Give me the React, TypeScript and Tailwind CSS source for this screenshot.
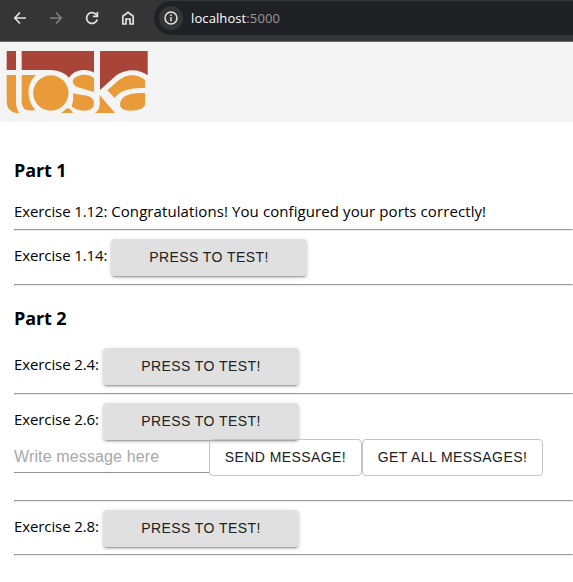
import type { ReactNode } from "react";

function Toolbar() {
  return (
    <div className="flex h-[42px] items-start border-b border-[#6c6c6c] bg-[#353535] text-[#e3e3e3]">
      <div className="flex h-9 w-[154px] items-center gap-4 pl-[10px]">
        <svg className="size-5 shrink-0" viewBox="0 0 20 20" fill="none" stroke="currentColor" strokeWidth="1.7">
          <path d="M16 10H5M10 4.5 4.8 10l5.2 5.5" />
        </svg>
        <svg className="size-5 shrink-0 text-[#808080]" viewBox="0 0 20 20" fill="none" stroke="currentColor" strokeWidth="1.7">
          <path d="M4 10h11M10 4.5l5.2 5.5-5.2 5.5" />
        </svg>
        <svg className="size-5 shrink-0" viewBox="0 0 20 20" fill="none" stroke="currentColor" strokeWidth="1.7">
          <path d="M15.2 11.5A5.4 5.4 0 1 1 13.8 6.2L15 7.5" />
          <path d="M15.4 4v4.3h-4.5" />
        </svg>
        <svg className="size-5 shrink-0" viewBox="0 0 20 20" fill="none" stroke="currentColor" strokeWidth="1.7">
          <path d="M4.8 8.2 10 4.4l5.2 3.8V16H12v-5H8v5H4.800Z" />
        </svg>
      </div>
      <div className="mt-px flex h-[34px] flex-1 items-center rounded-l-full bg-[#202124] pl-[5px]">
        <div className="flex size-6 items-center justify-center rounded-full bg-[#353535]">
          <svg className="size-4" viewBox="0 0 16 16" fill="none" stroke="currentColor" strokeWidth="1.5">
            <circle cx="8" cy="8" r="6" />
            <path d="M8 7.200v4M8 4.600v1.500" />
          </svg>
        </div>
        <p className="ml-2 pt-px font-['Open_Sans',sans-serif] text-[13px] tracking-[0.1px] text-white">
          localhost<span className="text-[#9a9a9a]">:5000</span>
        </p>
      </div>
    </div>
  );
}

function Logo() {
  return (
    <svg className="h-20 w-40" viewBox="0 0 480 240" role="img" aria-label="toska">
      <path fill="#a94438" d="M20 21H48V78H20ZM65 21H282V86C263 74 225 73 207 101C187 80 166 78 140 78H65ZM300 21H443V94C420 76 383 71 349 94L300 138Z" />
      <g fill="#e99b39">
        <path d="M20 93H48V170Q48 195 58 207H48Q20 202 20 172Z" />
        <path d="M65 93H108C78 119 79 168 106 198Q68 206 65 177Z" />
        <circle cx="152.500" cy="147" r="53" />
        <path d="M282 103V144L238 131Q219 127 218 111C225 91 265 85 282 103Z" />
        <path d="M219 147C234 154 260 151 274 161C288 172 283 195 263 199C241 203 222 195 215 187Q222 168 219 147Z" />
        <path d="M197 196Q207 188 215 201L219 207H184ZM299 153 345 207H284Q299 199 299 181Z" />
        <path d="M322 139L356 109C380 88 414 89 435 108V132C385 130 356 143 344 162Z" />
        <path d="M435 147V181C432 196 411 200 391 200C367 200 357 189 361 174C367 153 396 146 435 147Z" />
      </g>
    </svg>
  );
}

function Rule({ className = "" }: { className?: string }) {
  return <hr className={`h-[2px] shrink-0 border border-t-[#9a9a9a] border-r-[#eeeeee] border-b-[#eeeeee] border-l-[#9a9a9a] ${className}`} />;
}

function TestButton() {
  return (
    <button className="h-[36.5px] w-[196px] rounded-[4px] bg-[#e0e0e0] pt-px font-['Liberation_Sans',sans-serif] text-[14px] tracking-[0.42px] text-[#212121] shadow-[0_3px_1px_-2px_rgba(0,0,0,0.2),0_2px_2px_0_rgba(0,0,0,0.14),0_1px_5px_0_rgba(0,0,0,0.12)]">
      PRESS TO TEST!
    </button>
  );
}

function ActionButton({ children, className }: { children: ReactNode; className: string }) {
  return (
    <button className={`h-[37px] rounded-[4px] border border-[#c4c4c4] font-['Liberation_Sans',sans-serif] text-[14px] tracking-[0.42px] text-[#212121] ${className}`}>
      {children}
    </button>
  );
}

function Exercise({ label, wide = false }: { label: string; wide?: boolean }) {
  return (
    <div className="flex h-[36.5px]">
      <p className={`shrink-0 pt-1 leading-6 ${wide ? "w-[97px]" : "w-[89px]"}`}>{label}</p>
      <TestButton />
    </div>
  );
}

export default function App() {
  return (
    <div className="h-[582px] overflow-hidden bg-white font-['Open_Sans',sans-serif] text-[15px] tracking-[-0.1px] whitespace-nowrap text-black">
      <Toolbar />
      <header className="h-20 bg-[#f4f4f4] pt-[2px]">
        <Logo />
      </header>
      <main className="flex flex-col pl-[14px]">
        <h3 className="mt-[35px] h-[26px] text-[18px] leading-[26px] font-bold">Part 1</h3>
        <p className="mt-4 h-6 leading-6">
          Exercise 1.12: <span className="tracking-[0.09px]">Congratulations! You configured your ports correctly!</span>
        </p>
        <Rule className="mt-[6px] mb-2" />
        <Exercise label="Exercise 1.14:" wide />
        <Rule className="mt-[8.5px]" />
        <h3 className="mt-[19px] h-[26px] text-[18px] leading-[26px] font-bold">Part 2</h3>
        <div className="mt-[17px]">
          <Exercise label="Exercise 2.4:" />
        </div>
        <Rule className="mt-[8.5px] mb-2" />
        <Exercise label="Exercise 2.6:" />
        <div className="-mt-[0.5px] flex h-[37px]">
          <input
            className="h-[34px] w-[195px] border-b border-[#949494] pt-[3px] font-['Liberation_Sans',sans-serif] text-[16px] tracking-[0.13px] outline-none placeholder:text-[#a8a8a8]"
            placeholder="Write message here"
          />
          <ActionButton className="w-[153px]">SEND MESSAGE!</ActionButton>
          <ActionButton className="w-[181px]">GET ALL MESSAGES!</ActionButton>
        </div>
        <Rule className="mt-6 mb-2" />
        <Exercise label="Exercise 2.8:" />
        <Rule className="mt-[7.5px]" />
      </main>
    </div>
  );
}
